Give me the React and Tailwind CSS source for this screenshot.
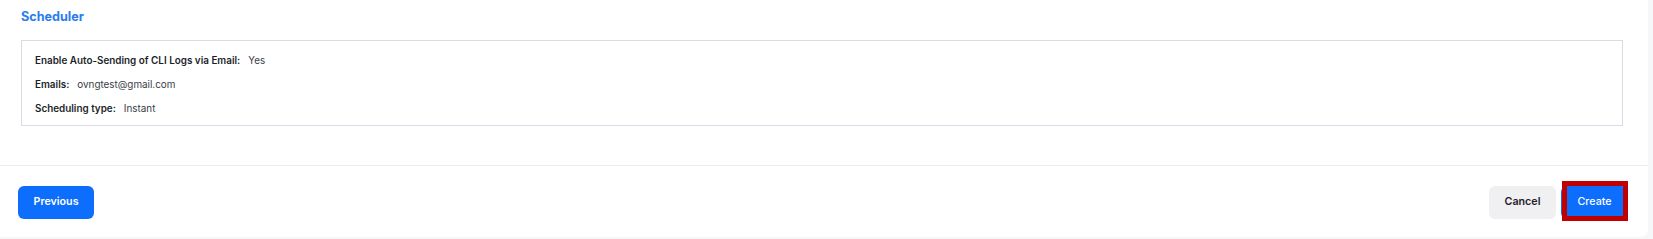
export default function App() {
  const rows = [
    ["Enable Auto-Sending of CLI Logs via Email:", "Yes"],
    ["Emails:", "ovngtest@gmail.com"],
    ["Scheduling type:", "Instant"],
  ];
  return (
    <div className="w-full h-[239px] bg-[#f6f7f9]" style={{ fontFamily: "Inter, 'Noto Sans', sans-serif" }}>
      <div className="w-[1648px] h-[237px] bg-white rounded-br-lg flex flex-col">
        <div className="pl-[21px] pr-[25px] pt-[7px]">
          <h2 className="text-[12.6px] leading-[20px] font-bold text-[#2a7cf0]">Scheduler</h2>
          <div className="mt-[13px] border border-[#d9dbe6] pt-[11px] pb-[9px] pl-[13px] flex flex-col gap-2">
            {rows.map(([k, v]) => (
              <div key={k} className="flex items-center gap-[8px] h-4 text-[9.9px] leading-4">
                <span className="font-semibold text-[#1c1f2a]">{k}</span>
                <span className="text-[#3a3d46]">{v}</span>
              </div>
            ))}
          </div>
        </div>
        <div className="mt-[39px] h-px bg-[#ececee]" />
        <div className="flex items-center justify-between pl-[18px] pr-[20px] pt-[20px]">
          <button className="w-[76px] h-[33px] rounded-md bg-[#0d6efd] text-white text-[10.7px] font-semibold">Previous</button>
          <div className="flex items-center gap-[5px]">
            <button className="w-[67px] h-[33px] rounded-md bg-[#f0f0f3] text-[#1f2128] text-[10.7px] font-semibold">Cancel</button>
            <button className="relative w-[67px] h-[33px] rounded-md bg-[#0d6efd] text-white text-[10.7px] font-medium">
              Create
              <span className="absolute top-[-5px] bottom-[-2px] left-[1px] right-0 border-[5px] border-[#c00000]" />
            </button>
          </div>
        </div>
      </div>
    </div>
  );
}
